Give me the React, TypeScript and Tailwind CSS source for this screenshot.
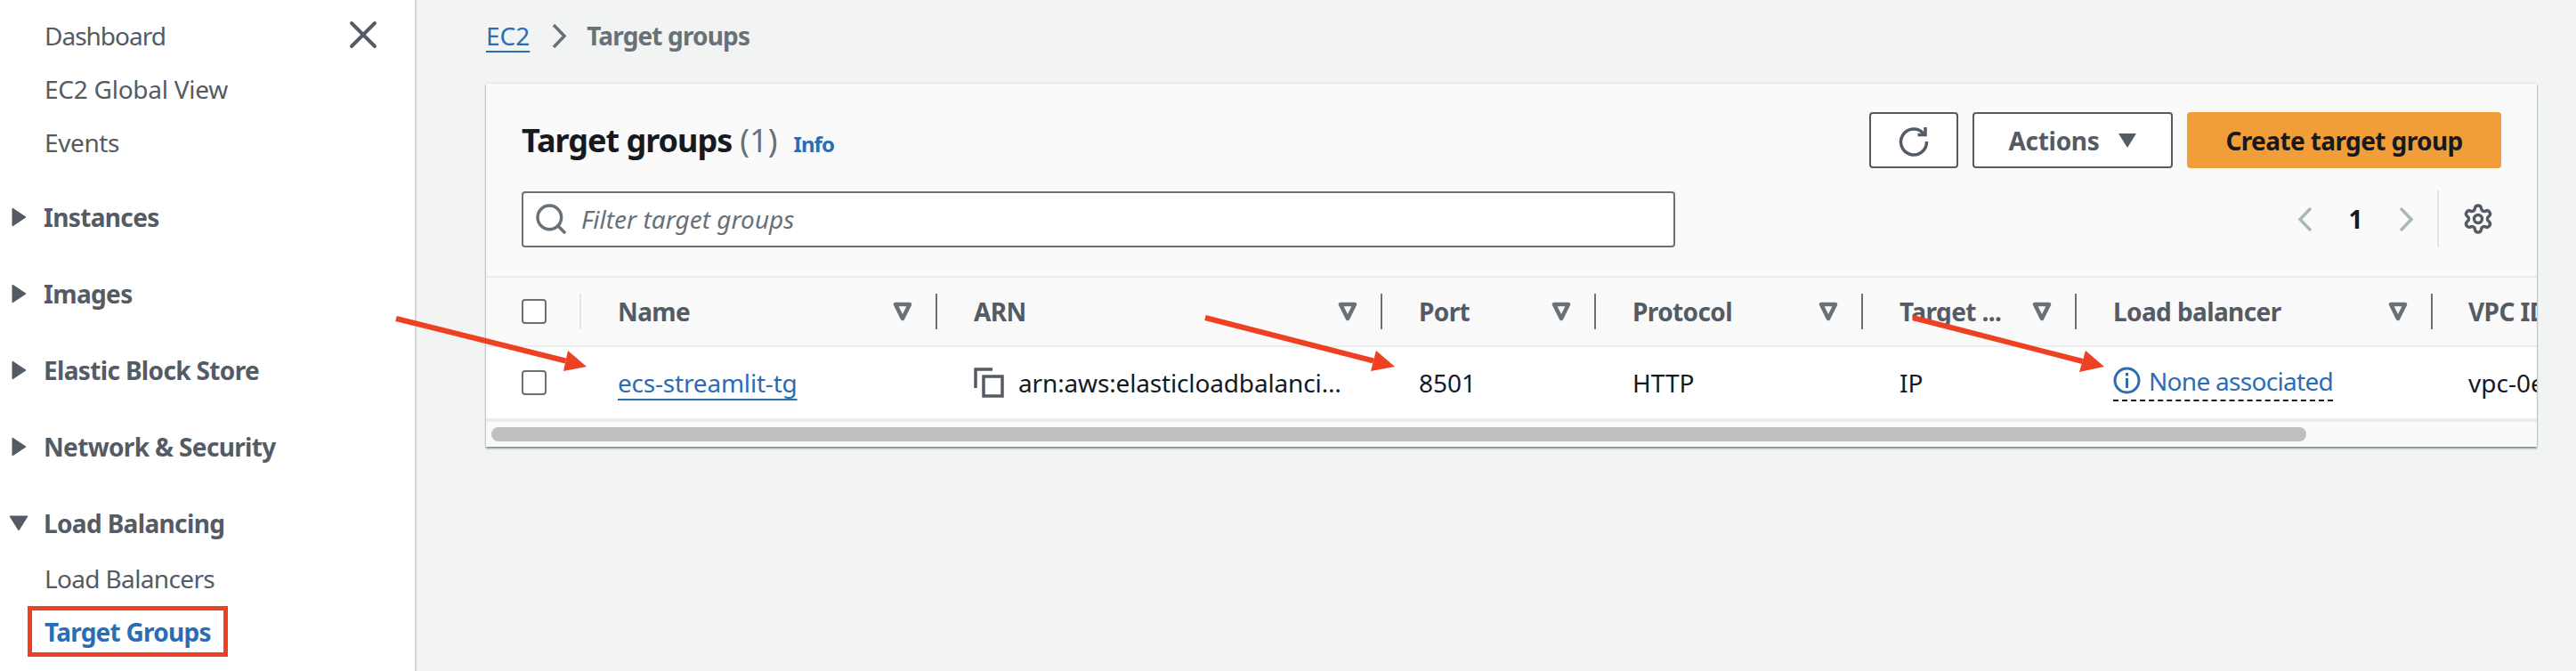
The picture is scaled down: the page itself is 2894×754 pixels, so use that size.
import { Search, Settings, X } from "lucide-react";

function Tri({ down = false }: { down?: boolean }) {
  return (
    <svg width="22" height="22" viewBox="0 0 22 22" className="shrink-0">
      {down ? (
        <path d="M1 3 H21 L11 19 Z" fill="#545b64" stroke="#545b64" strokeWidth="1" strokeLinejoin="round" />
      ) : (
        <path d="M4 1 L19 11 L4 21 Z" fill="#545b64" stroke="#545b64" strokeWidth="1" strokeLinejoin="round" />
      )}
    </svg>
  );
}

function Filter() {
  return (
    <svg width="22" height="24" viewBox="0 0 22 24" className="shrink-0">
      <path d="M3 4 H19 L11 20 Z" fill="none" stroke="#687078" strokeWidth="4.5" strokeLinejoin="round" />
    </svg>
  );
}

function Check() {
  return <div className="w-[28px] h-[28px] rounded-[4px] border-2 border-[#687078] bg-white" />;
}

function Chevron({ left = false, color }: { left?: boolean; color: string }) {
  return (
    <svg width="17" height="27" viewBox="0 0 17 27" fill="none" stroke={color} strokeWidth="3.5" className="shrink-0">
      <path d={left ? "M15 1 L3 13.5 L15 26" : "M2 1 L14 13.5 L2 26"} />
    </svg>
  );
}

function Section({ label, open = false }: { label: string; open?: boolean }) {
  return (
    <div className="h-[86px] flex items-center pl-[10px] gap-[17px] font-bold tracking-[-0.65px]">
      <Tri down={open} />
      <span>{label}</span>
    </div>
  );
}

function Item({ label, track }: { label: string; track: string }) {
  return <div className={`h-[60px] flex items-center pl-[50px] ${track}`}>{label}</div>;
}

function Head({ label, divider = "bg-[#687078]" }: { label: string; divider?: string }) {
  return (
    <div className="h-full flex items-center justify-between pl-[41px] pr-[28px] relative">
      <span className="font-bold text-[#545b64] whitespace-nowrap tracking-[-0.6px]">{label}</span>
      <Filter />
      <span className={`absolute right-0 top-[18px] bottom-[18px] w-[2px] ${divider}`} />
    </div>
  );
}

const GRID = "grid grid-cols-[107px_400px_500px_240px_300px_240px_400px_1fr]";

function Arrow({ x1, y1, x2, y2, a, b }: { x1: number; y1: number; x2: number; y2: number; a: number[]; b: number[] }) {
  const mx = (a[0] + b[0]) / 2;
  const my = (a[1] + b[1]) / 2;
  return (
    <g>
      <line x1={x1} y1={y1} x2={mx} y2={my} stroke="#ee4123" strokeWidth="6" />
      <polygon points={`${x2},${y2} ${a[0]},${a[1]} ${b[0]},${b[1]}`} fill="#ee4123" />
    </g>
  );
}

export default function App() {
  return (
    <div className="relative w-[2894px] h-[754px] overflow-hidden flex bg-[#f2f3f3] text-[28px] leading-[40px] text-[#16191f] font-['Noto_Sans',sans-serif]">
      <aside className="w-[468px] shrink-0 h-full bg-white border-r-2 border-[#d5d8d8] pt-[10px] text-[#545b64] relative">
        <X className="absolute left-[382px] top-[13px]" size={52} strokeWidth={1.8} color="#545b64" />
        <Item label="Dashboard" track="tracking-[-1px]" />
        <Item label="EC2 Global View" track="tracking-[-0.25px]" />
        <Item label="Events" track="tracking-[-0.4px]" />
        <div className="mt-[11px]">
          <Section label="Instances" />
          <Section label="Images" />
          <Section label="Elastic Block Store" />
          <Section label="Network &amp; Security" />
          <Section label="Load Balancing" open />
        </div>
        <div className="h-[38px] flex items-center pl-[50px] tracking-[-0.65px]">Load Balancers</div>
        <div className="mt-[12px] ml-[31px] w-[225px] h-[57px] border-[5px] border-[#ee4123] flex items-center pl-[14px] font-bold text-[#2a6db5] tracking-[-0.75px]">
          Target Groups
        </div>
      </aside>

      <main className="flex-1 min-w-0 pl-[78px] pr-[44px]">
        <div className="h-[94px] flex items-center pb-[14px]">
          <span className="text-[#2a6db5] underline underline-offset-[6px] decoration-2">EC2</span>
          <span className="ml-[25px] mr-[22px]"><Chevron color="#687078" /></span>
          <span className="font-bold text-[#687078] tracking-[-0.85px]">Target groups</span>
        </div>

        <section className="bg-[#fafafa] shadow-[0_2px_2px_rgba(0,28,36,0.45),0_0_2px_rgba(0,28,36,0.2)] overflow-hidden">
          <div className="h-[216px] px-[40px] pt-[32px] flex flex-col">
            <div className="flex items-start justify-between">
              <div className="flex items-baseline h-[63px] pt-[9px]">
                <h1 className="text-[36px] leading-[46px] font-bold tracking-[-1px]">Target groups</h1>
                <span className="text-[36px] leading-[46px] text-[#687078] ml-[9px]">(1)</span>
                <span className="text-[24px] font-bold text-[#2a6db5] ml-[18px] tracking-[-0.9px]">Info</span>
              </div>
              <div className="flex gap-[16px]">
                <button className="w-[100px] h-[63px] flex items-center justify-center bg-white border-2 border-[#545b64] rounded-[4px]">
                  <svg width="36" height="36" viewBox="0 0 36 36" fill="none" stroke="#545b64" strokeWidth="3.5">
                    <path d="M29 10 A14.5 14.5 0 1 0 32.5 19" />
                    <path d="M31 3 V11.5 H22.5" />
                  </svg>
                </button>
                <button className="w-[225px] h-[63px] flex items-center justify-center gap-[20px] bg-white border-2 border-[#545b64] rounded-[4px] font-bold text-[#545b64]">
                  <span className="tracking-[-0.3px]">Actions</span>
                  <svg width="22" height="18" viewBox="0 0 22 18"><path d="M1 1 H21 L11 17 Z" fill="#545b64" /></svg>
                </button>
                <button className="w-[353px] h-[63px] flex items-center justify-center bg-[#f29e38] rounded-[4px] font-bold text-[#16191f] tracking-[-0.6px]">
                  Create target group
                </button>
              </div>
            </div>
            <div className="flex items-center justify-between mt-[25px]">
              <div className="w-[1296px] h-[63px] bg-white border-2 border-[#687078] rounded-[4px] flex items-center pl-[11px] gap-[14px] italic text-[#687078]">
                <Search size={40} strokeWidth={2.1} color="#687078" />
                <span>Filter target groups</span>
              </div>
              <div className="flex items-center pr-[8px]">
                <Chevron left color="#aab7b8" />
                <span className="font-bold w-[97px] text-center">1</span>
                <Chevron color="#aab7b8" />
                <span className="w-[2px] h-[64px] bg-[#e4e6e6] ml-[26px] mr-[26px]" />
                <Settings size={36} strokeWidth={2.3} color="#545b64" />
              </div>
            </div>
          </div>

          <div className={`${GRID} h-[80px] border-t-2 border-b-2 border-[#eaeded]`}>
            <div className="h-full flex items-center pl-[40px] relative">
              <Check />
              <span className="absolute right-0 top-[18px] bottom-[18px] w-[2px] bg-[#e4e6e6]" />
            </div>
            <Head label="Name" />
            <Head label="ARN" />
            <Head label="Port" />
            <Head label="Protocol" />
            <Head label="Target ..." />
            <Head label="Load balancer" />
            <div className="h-full flex items-center pl-[40px] overflow-hidden">
              <span className="font-bold text-[#545b64] whitespace-nowrap tracking-[-0.6px]">VPC ID</span>
            </div>
          </div>

          <div className={`${GRID} h-[84px] bg-white items-center border-b-4 border-[#eaeded]`}>
            <div className="pl-[40px]"><Check /></div>
            <div className="pl-[41px]">
              <span className="text-[#2a6db5] underline underline-offset-[7px] decoration-2 tracking-[-0.2px]">ecs-streamlit-tg</span>
            </div>
            <div className="pl-[41px] flex items-center gap-[16px] whitespace-nowrap">
              <svg width="34" height="34" viewBox="0 0 34 34" fill="none" stroke="#545b64" strokeWidth="3.5" className="shrink-0">
                <path d="M2 23 V2 H21" />
                <rect x="11" y="10" width="21" height="22" />
              </svg>
              <span className="tracking-[-0.15px]">arn:aws:elasticloadbalanci…</span>
            </div>
            <div className="pl-[41px]">8501</div>
            <div className="pl-[41px]">HTTP</div>
            <div className="pl-[41px]">IP</div>
            <div className="pl-[41px]">
              <span className="inline-flex items-center gap-[9px] text-[#2a6db5] border-b-2 border-dashed border-[#16191f] pb-[1px] whitespace-nowrap tracking-[-0.7px]">
                <svg width="31" height="31" viewBox="0 0 31 31" fill="none" stroke="#2a6db5" strokeWidth="3" className="shrink-0">
                  <circle cx="15.5" cy="15.5" r="13.5" />
                  <path d="M15.5 13 V24" />
                  <path d="M15.5 7 V10.5" />
                </svg>
                None associated
              </span>
            </div>
            <div className="pl-[40px] whitespace-nowrap overflow-hidden">vpc-0e</div>
          </div>

          <div className="h-[28px] px-[6px] pt-[6px]">
            <div className="w-[2039px] h-[16px] rounded-[8px] bg-[#bfbfbf]" />
          </div>
        </section>
      </main>

      <svg className="absolute left-0 top-0 pointer-events-none" width="2894" height="754">
        <Arrow x1={445} y1={358} x2={659} y2={412} a={[638, 394]} b={[633, 417]} />
        <Arrow x1={1354} y1={357} x2={1567} y2={412} a={[1546, 394]} b={[1540, 417]} />
        <Arrow x1={2149} y1={357} x2={2364} y2={412} a={[2343, 394]} b={[2336, 418]} />
      </svg>
    </div>
  );
}
